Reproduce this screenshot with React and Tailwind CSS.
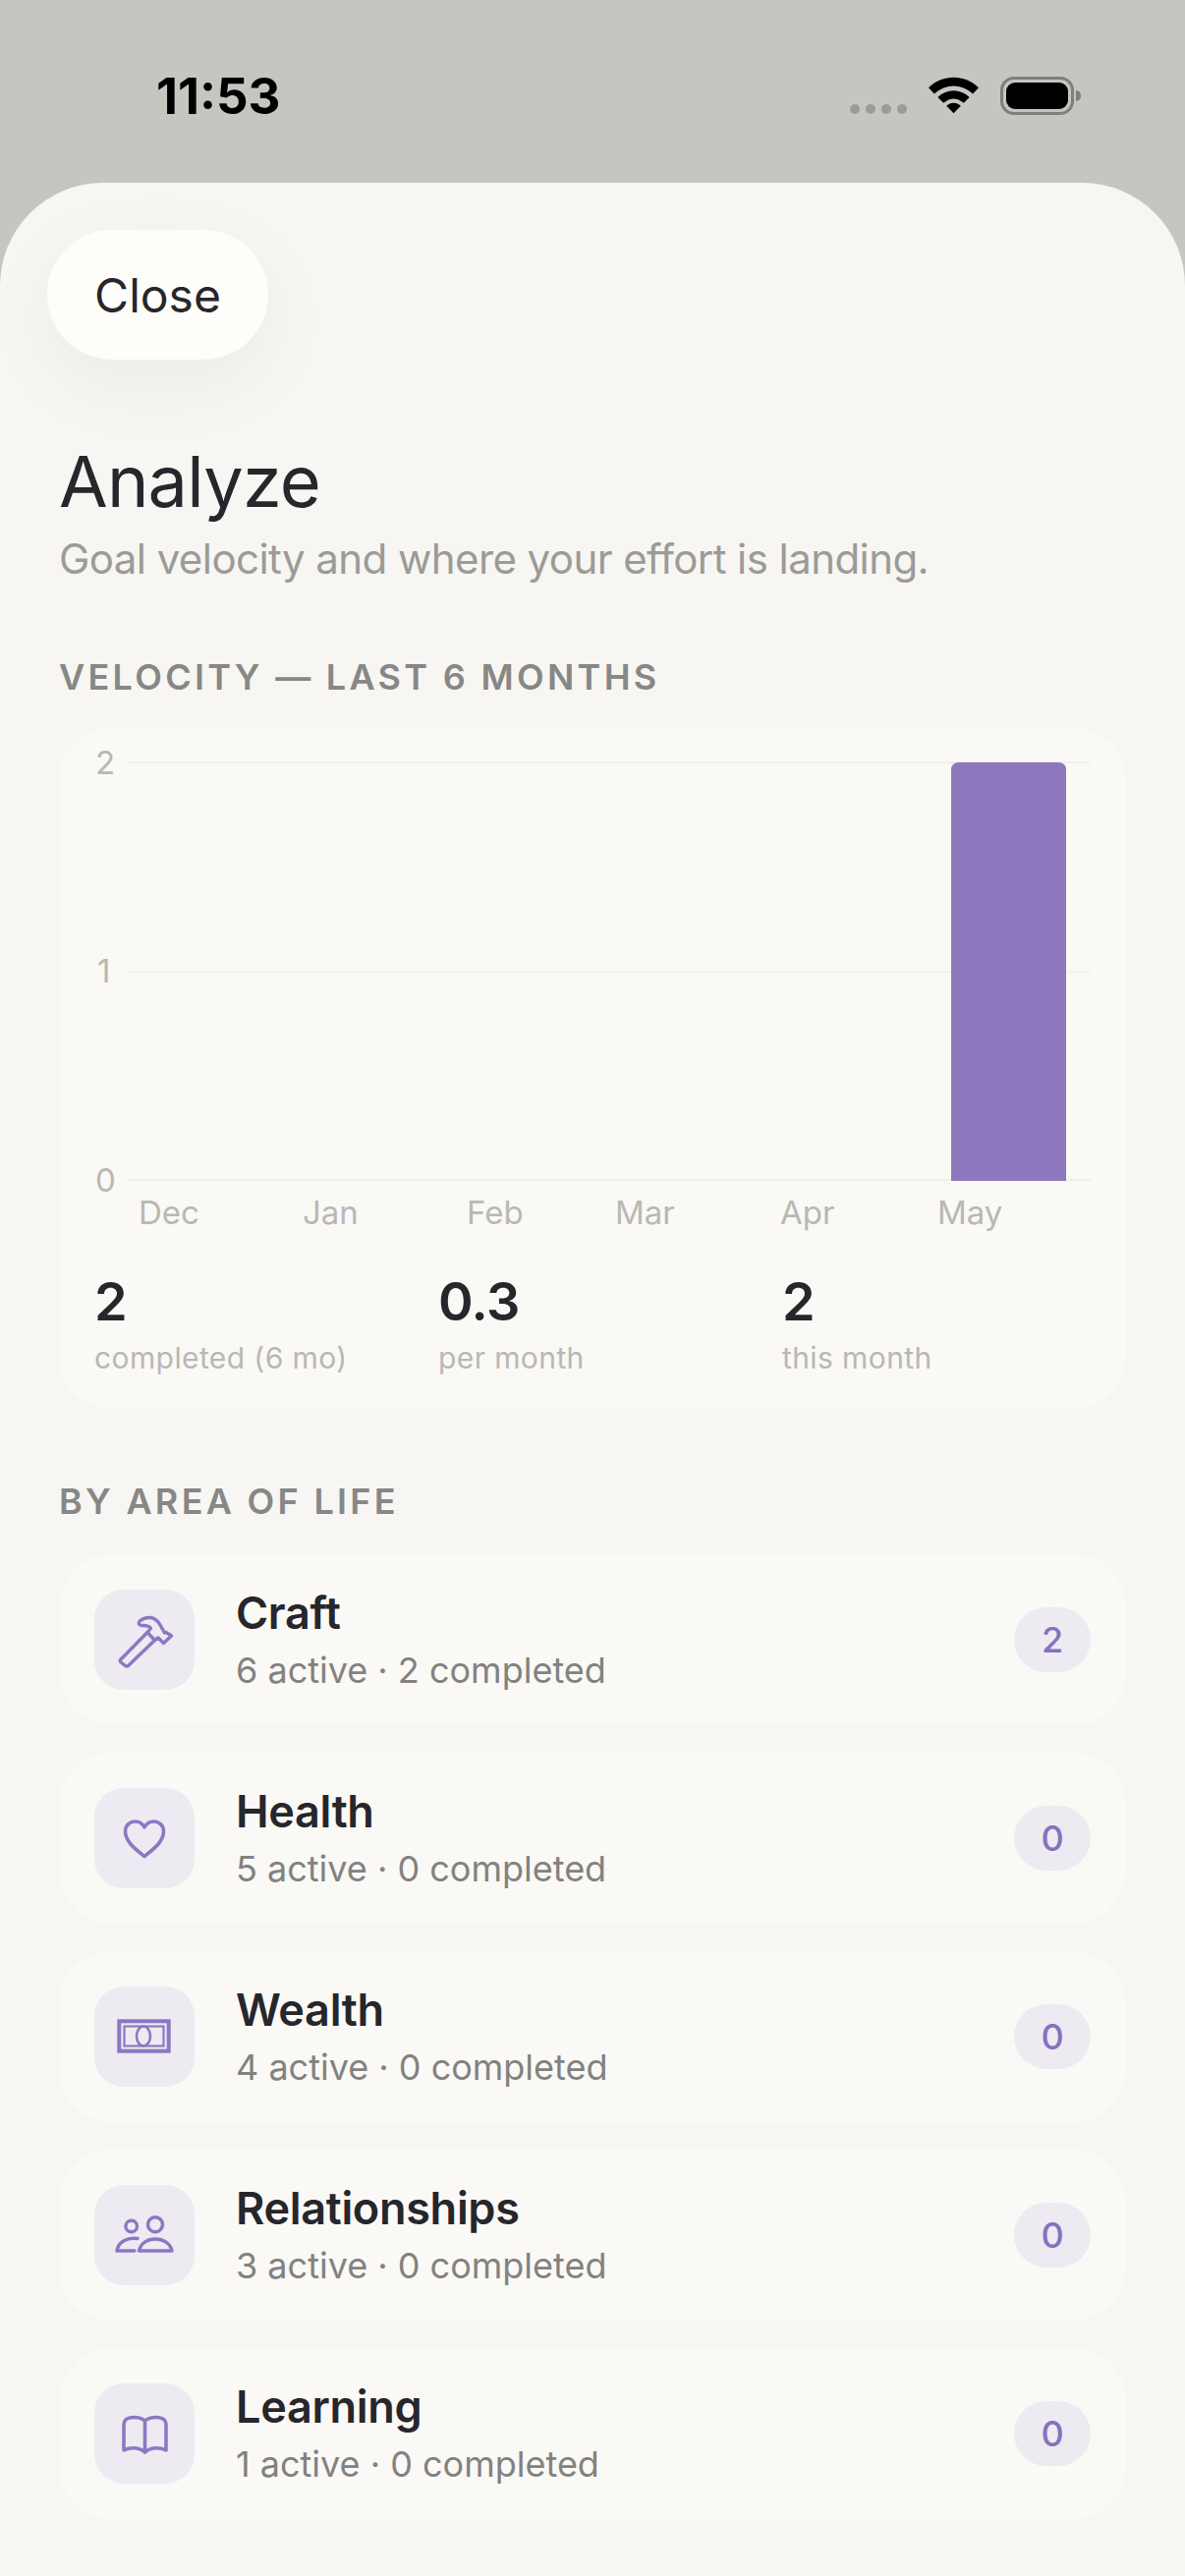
import React from "react";

const ink = "#8b78c2";

function Hammer() {
  return (
    <svg width="60" height="60" viewBox="0 0 60 60" fill="none" stroke={ink} strokeWidth="3.4" strokeLinejoin="round" strokeLinecap="round">
      <path d="M5.5 50.5 L33 22.5 L40.5 30.5 L13.5 56.5 Q12 57.5 10.5 56.5 L5.5 52.5 Q4.8 51.5 5.5 50.5 Z" />
      <path d="M33 22.5 L36.5 18.5 Q34 15 27 15.5 Q23 15 25 11 Q30 7 36 7.5 Q42 8 46 15 L50.5 23 L52 22.5 L57.5 26 L49.5 33.5 L44 28 L40.5 30.5" />
    </svg>
  );
}
function Heart() {
  return (
    <svg width="60" height="60" viewBox="0 0 60 60" fill="none" stroke={ink} strokeWidth="3.6" strokeLinejoin="round">
      <path d="M30 48.5 C22 42 10.5 34 10.5 23 C10.5 16.5 15.5 13 20.5 13 C24.5 13 28 15 30 19 C32 15 35.5 13 39.5 13 C44.5 13 49.5 16.5 49.5 23 C49.5 34 38 42 30 48.5 Z" />
    </svg>
  );
}
function Money() {
  return (
    <svg width="60" height="60" viewBox="0 0 60 60" fill="none" stroke={ink}>
      <rect x="4.3" y="14.3" width="50.4" height="30.4" strokeWidth="4" />
      <rect x="9.5" y="19.5" width="40" height="20" strokeWidth="2.2" />
      <ellipse cx="29" cy="29.5" rx="7" ry="10" strokeWidth="2.6" />
    </svg>
  );
}
function People() {
  return (
    <svg width="60" height="60" viewBox="0 0 60 60" fill="none" stroke={ink} strokeWidth="3.4" strokeLinecap="round" strokeLinejoin="round">
      <circle cx="16.7" cy="21" r="5.8" />
      <circle cx="41" cy="19.3" r="7.5" />
      <path d="M23 33.5 C13 32 3 37 2 46 L20 46" />
      <path d="M24.5 46 C26 38.5 33 34 41 34 C49 34 56.5 38.5 58 46 Z" />
    </svg>
  );
}
function Book() {
  return (
    <svg width="60" height="60" viewBox="0 0 60 60" fill="none" stroke={ink} strokeWidth="3.6" strokeLinejoin="round" strokeLinecap="round">
      <path d="M30.5 17 C27 14 23 13.5 19 13.5 C12 13.5 9 16 9 22 L9 47 C16 43.5 25 44 30.5 49 C36 44 45 43.5 52 47 L52 22 C52 16 49 13.5 42 13.5 C38 13.5 34 14 30.5 17 Z" />
      <path d="M30.5 17 L30.5 49" />
    </svg>
  );
}

const rows = [
  { name: "Craft", sub: "6 active · 2 completed", n: 2, Icon: Hammer },
  { name: "Health", sub: "5 active · 0 completed", n: 0, Icon: Heart },
  { name: "Wealth", sub: "4 active · 0 completed", n: 0, Icon: Money },
  { name: "Relationships", sub: "3 active · 0 completed", n: 0, Icon: People },
  { name: "Learning", sub: "1 active · 0 completed", n: 0, Icon: Book },
];

const months = [
  ["Dec", 81],
  ["Jan", 248],
  ["Feb", 415],
  ["Mar", 566],
  ["Apr", 734],
  ["May", 894],
];

function Chart() {
  const axis = { fontSize: 33, fill: "#b8b8b4", fontFamily: "Inter, sans-serif" };
  return (
    <svg width="1086" height="480" viewBox="0 0 1086 480" className="block">
      <line x1="69" x2="1050" y1="35" y2="35" stroke="#f0efea" strokeWidth="2" />
      <line x1="69" x2="1050" y1="248" y2="248" stroke="#f3f2ed" strokeWidth="2" />
      <line x1="69" x2="1050" y1="460" y2="460" stroke="#f0efea" strokeWidth="2" />
      <text x="37" y="47" {...axis}>2</text>
      <text x="39" y="259" {...axis}>1</text>
      <text x="37" y="472" {...axis}>0</text>
      <path d="M908 461 L908 43 Q908 35 916 35 L1017 35 Q1025 35 1025 43 L1025 461 Z" fill="#8d78bd" />
    </svg>
  );
}

export default function App() {
  return (
    <div className="relative w-[1206px] h-[2622px] overflow-hidden bg-[#c6c5c0] font-['Inter',sans-serif]">
      <div className="h-[186px] flex items-start justify-between pt-[72px] pl-[159px] pr-[106px]">
        <span className="text-[51px] leading-[52px] font-bold text-black">11:53</span>
        <div className="flex items-start gap-[22px] pt-[6px]">
          <div className="flex gap-[6px] mt-[28px]">
            <span className="w-[10px] h-[10px] rounded-full bg-[#9c9b98]" />
            <span className="w-[10px] h-[10px] rounded-full bg-[#9c9b98]" />
            <span className="w-[10px] h-[10px] rounded-full bg-[#9c9b98]" />
            <span className="w-[10px] h-[10px] rounded-full bg-[#9c9b98]" />
          </div>
          <svg width="51" height="38" viewBox="0 0 52 38">
            <path d="M0 11 C15 -3 37 -3 52 11 L46 17.5 C34 6.5 18 6.5 6 17.5 Z" fill="#000" />
            <path d="M9.5 21 C19 12 33 12 42.5 21 L36.5 27 C29 21 23 21 15.5 27 Z" fill="#000" />
            <path d="M18.5 30 C23 26 29 26 33.5 30 L26 37.5 Z" fill="#000" />
          </svg>
          <div className="flex items-center">
            <div className="w-[75px] h-[39px] rounded-[14px] border-[3px] border-[#807f7b] p-[3px]">
              <div className="w-full h-full rounded-[9px] bg-black" />
            </div>
            <div className="w-[5px] h-[11px] rounded-r-full bg-[#807f7b] ml-[2px]" />
          </div>
        </div>
      </div>

      <div className="h-[2436px] rounded-t-[105px] bg-[#f7f6f2] pt-[48px]">
        <button className="ml-[48px] w-[225px] h-[132px] pt-[2px] rounded-[66px] bg-[#fefdf9] text-[48px] text-[#26262b] shadow-[0_24px_80px_rgba(0,0,0,0.05)]">
          Close
        </button>
        <div className="px-[60px]">
          <h1 className="mt-[76px] text-[72px] leading-[96px] font-normal tracking-[-0.8px] text-[#26262b]">Analyze</h1>
          <p className="mt-[4px] text-[42px] leading-[54px] tracking-[-0.57px] text-[#9b9b97]">Goal velocity and where your effort is landing.</p>
          <h2 className="mt-[72px] text-[36px] leading-[42px] font-semibold tracking-[3.3px] text-[#878786]">VELOCITY — LAST 6 MONTHS</h2>
          <div className="mt-[31px] h-[693px] rounded-[54px] bg-[#faf9f6] relative">
            <Chart />
            <div className="absolute inset-x-0 top-[472px] h-[42px]">
              {months.map(([m, x]) => (
                <span key={m} className="absolute top-0 text-[33px] leading-[42px] text-[#b8b8b4]" style={{ left: x }}>{m}</span>
              ))}
            </div>
            <div className="absolute inset-x-[36px] top-[551px] grid grid-cols-3 gap-[36px]">
              {[["2", "completed (6 mo)"], ["0.3", "per month"], ["2", "this month"]].map(([v, l], i) => (
                <div key={i}>
                  <div className="text-[54px] leading-[66px] font-semibold tracking-[-0.5px] text-[#26262b]">{v}</div>
                  <div className="mt-[3px] text-[30px] leading-[42px] tracking-[0.4px] text-[#b8b8b4]">{l}</div>
                </div>
              ))}
            </div>
          </div>
          <h2 className="mt-[73px] text-[36px] leading-[42px] font-semibold tracking-[3.3px] text-[#878786]">BY AREA OF LIFE</h2>
          <div className="mt-[33px] flex flex-col gap-[28px]">
            {rows.map(({ name, sub, n, Icon }) => (
              <div key={name} className="h-[174px] rounded-[54px] bg-[#faf9f6] flex items-center px-[36px]">
                <div className="w-[102px] h-[102px] rounded-[30px] bg-[#edeaf2] flex items-center justify-center shrink-0">
                  <Icon />
                </div>
                <div className="ml-[42px] flex-1 pb-[4px]">
                  <div className="text-[45px] leading-[60px] font-semibold tracking-[-0.3px] text-[#26262b]">{name}</div>
                  <div className="mt-[6px] text-[36px] leading-[44px] text-[#82827f]">{sub}</div>
                </div>
                <div className="w-[78px] h-[66px] rounded-[33px] bg-[#edeaf2] flex items-center justify-center text-[36px] font-medium text-[#8472bd]">{n}</div>
              </div>
            ))}
          </div>
        </div>
      </div>
    </div>
  );
}
